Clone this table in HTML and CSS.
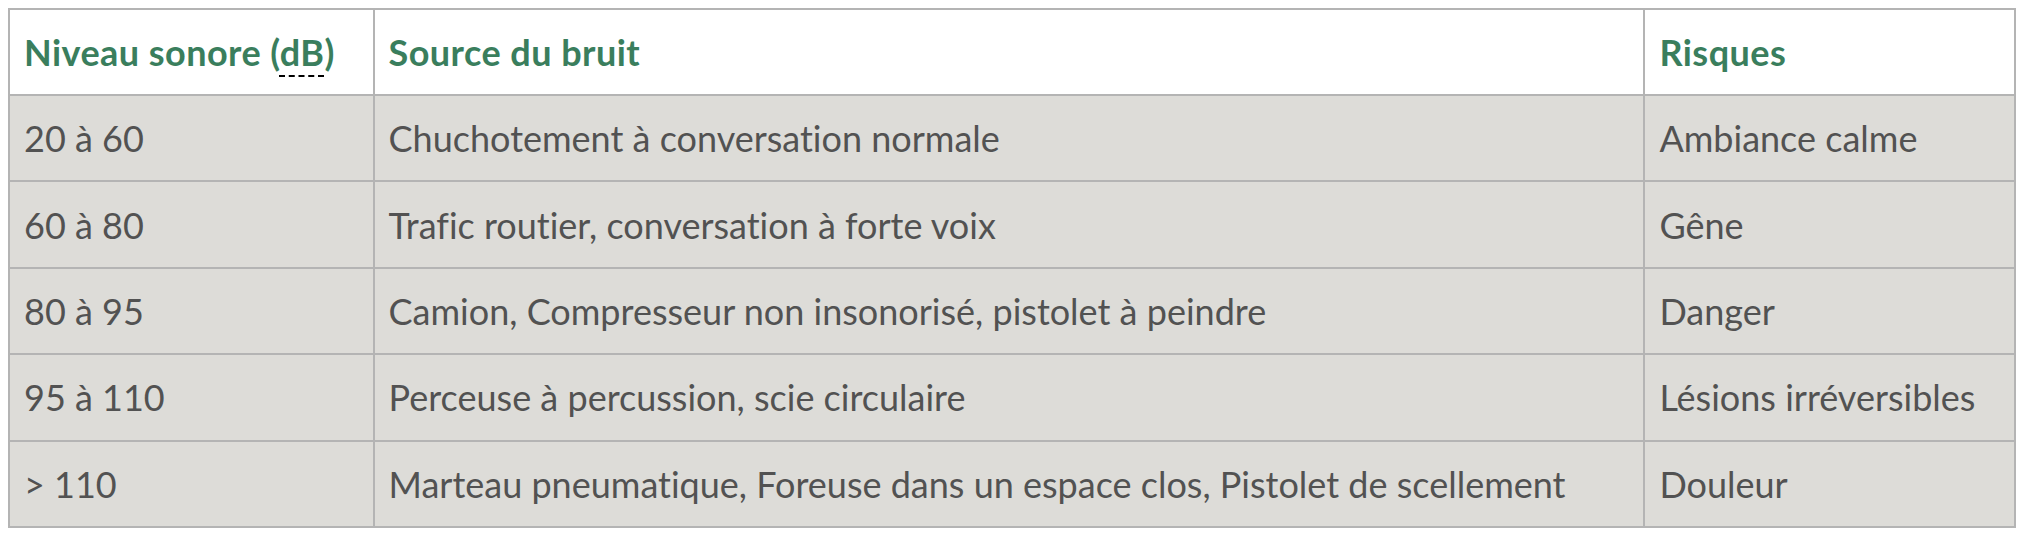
FILE: index.html
```html
<!DOCTYPE html>
<html lang="fr">
<head>
<meta charset="utf-8">
<link rel="stylesheet" href="styles.css">
</head>
<body>
<table class="noise">
  <colgroup>
    <col class="c1"><col class="c2"><col class="c3">
  </colgroup>
  <thead>
    <tr>
      <th>Niveau sonore (<abbr title="décibel">dB</abbr>)</th>
      <th>Source du bruit</th>
      <th>Risques</th>
    </tr>
  </thead>
  <tbody>
    <tr><td>20 à 60</td><td>Chuchotement à conversation normale</td><td>Ambiance calme</td></tr>
    <tr><td>60 à 80</td><td>Trafic routier, conversation à forte voix</td><td>Gêne</td></tr>
    <tr><td>80 à 95</td><td>Camion, Compresseur non insonorisé, pistolet à peindre</td><td>Danger</td></tr>
    <tr><td>95 à 110</td><td>Perceuse à percussion, scie circulaire</td><td>Lésions irréversibles</td></tr>
    <tr><td>&gt; 110</td><td>Marteau pneumatique, Foreuse dans un espace clos, Pistolet de scellement</td><td>Douleur</td></tr>
  </tbody>
</table>
</body>
</html>
```
FILE: styles.css
```css
html, body {
  background: #ffffff;
}
body {
  margin: 8px;
  font-family: "Source Sans Pro", Lato, "Liberation Sans", sans-serif;
  font-variant-ligatures: no-common-ligatures;
  font-feature-settings: "liga" 0, "clig" 0;
}
.noise {
  width: 100%;
  border-collapse: collapse;
  border: 2px solid #b4b4b4;
  font-size: 36px;
}
.c1 { width: 365px; }
.c2 { width: 1272px; }
.c3 { width: 371px; }
.noise th,
.noise td {
  border: 2px solid #b4b4b4;
  padding: 15px 14px;
  line-height: 54px;
  text-align: left;
  vertical-align: middle;
  white-space: nowrap;
}
.noise th {
  background: #ffffff;
  color: #3a7e5d;
  font-weight: 700;
  letter-spacing: 0.45px;
}
.noise td {
  background: #dddcd8;
  color: #525252;
  font-weight: 400;
  padding-top: 15.2px;
  padding-bottom: 15.2px;
}
.noise abbr {
  text-decoration: underline dashed #000;
  text-decoration-thickness: 2px;
  text-underline-offset: 9px;
}
```
